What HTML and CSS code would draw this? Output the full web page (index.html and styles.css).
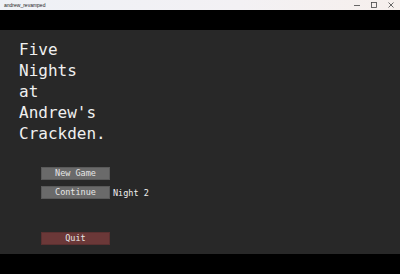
FILE: index.html
```html
<!DOCTYPE html>
<html>
<head>
<meta charset="utf-8">
<link rel="stylesheet" href="styles.css">
</head>
<body>
<div class="window">
  <div class="titlebar">
    <span class="app-title">andrew_revamped</span>
    <div class="controls">
      <svg class="ctl" width="8" height="8" viewBox="0 0 8 8"><path d="M1 4.5H7" stroke="#444" stroke-width="0.8"/></svg>
      <svg class="ctl" width="8" height="8" viewBox="0 0 8 8"><rect x="1.5" y="1.5" width="5" height="5" fill="none" stroke="#444" stroke-width="0.8"/></svg>
      <svg class="ctl" width="8" height="8" viewBox="0 0 8 8"><path d="M1.5 1.5L6.5 6.5M6.5 1.5L1.5 6.5" stroke="#444" stroke-width="0.8"/></svg>
    </div>
  </div>
  <div class="letterbox"></div>
  <div class="game">
    <h1 class="title">Five<br>Nights<br>at<br>Andrew's<br>Crackden.</h1>
    <div class="menu">
      <div class="row"><button class="btn">New Game</button></div>
      <div class="row"><button class="btn">Continue</button><span class="night">Night 2</span></div>
      <div class="row quit-row"><button class="btn quit">Quit</button></div>
    </div>
  </div>
  <div class="letterbox bottom"></div>
</div>
</body>
</html>
```
FILE: styles.css
```css
* { box-sizing: border-box; }
html, body { margin: 0; padding: 0; background: #000; }
.window {
  width: 400px;
  height: 274px;
  display: flex;
  flex-direction: column;
  overflow: hidden;
}
.titlebar {
  height: 10px;
  background: linear-gradient(90deg, #eef1f6 0%, #f3f1f4 60%, #f6efec 100%);
  display: flex;
  align-items: center;
  justify-content: space-between;
  padding-left: 4px;
}
.app-title {
  font-family: "Liberation Sans", sans-serif;
  font-size: 5px;
  color: #222;
  line-height: 10px;
}
.controls {
  display: flex;
  gap: 9px;
  padding-right: 5px;
  height: 10px;
  align-items: center;
}
.ctl { display: block; }
.letterbox { height: 20px; background: #000; }
.letterbox.bottom { height: 20px; flex: none; }
.game {
  height: 224px;
  background: #282828;
  padding: 9px 0 0 19px;
  font-family: "DejaVu Sans Mono", monospace;
}
.title {
  margin: 0;
  font-weight: normal;
  font-size: 16px;
  line-height: 21px;
  color: #f0f0f0;
}
.menu {
  margin-top: 23px;
  margin-left: 22px;
  display: flex;
  flex-direction: column;
  gap: 6px;
}
.row { display: flex; align-items: center; gap: 3px; }
.quit-row { margin-top: 27px; }
.btn {
  width: 69px;
  height: 13px;
  padding: 0;
  border: 1px solid #5a5a5a;
  background: #6a6a6a;
  color: #e6e6e6;
  font-family: "DejaVu Sans Mono", monospace;
  font-size: 8.5px;
  line-height: 11px;
}
.btn.quit { background: #6b3838; border-color: #5a3030; }
.night {
  font-size: 8.5px;
  color: #f0f0f0;
}
```
